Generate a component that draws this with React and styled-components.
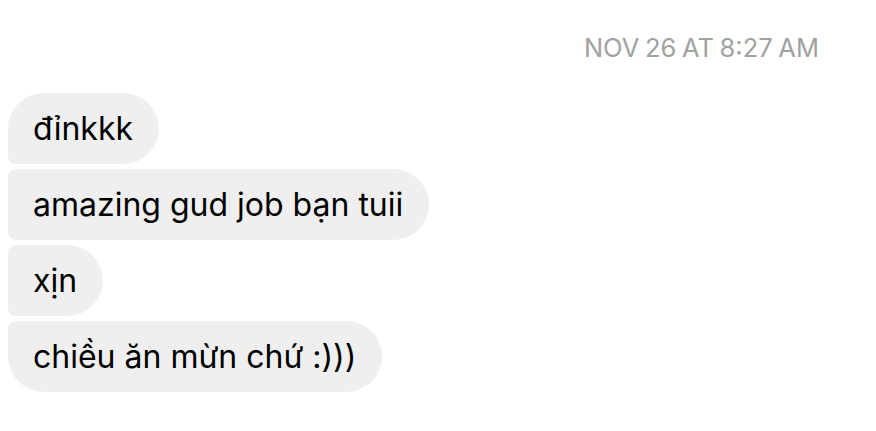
import React from "react";
import styled, { createGlobalStyle } from "styled-components";

const Global = createGlobalStyle`
  html, body { margin: 0; padding: 0; background: #fff; }
  body { font-family: Inter, "Noto Sans", sans-serif; -webkit-font-smoothing: antialiased; }
`;

const Screen = styled.div`
  width: 876px;
  height: 431px;
  overflow: hidden;
  background: #fff;
  display: flex;
  flex-direction: column;
  padding: 34px 0 0 8px;
  box-sizing: border-box;
`;

const Timestamp = styled.div`
  align-self: flex-end;
  margin-right: 57px;
  color: #a1a1a1;
  font-size: 25.5px;
  line-height: 28px;
  word-spacing: -1.5px;
`;

const Thread = styled.div`
  margin-top: 31px;
  display: flex;
  flex-direction: column;
  align-items: flex-start;
  gap: 5px;
`;

const Bubble = styled.div`
  background: #efefef;
  color: #000;
  font-size: 32px;
  line-height: 71px;
  height: 71px;
  padding: 0 26px 0 25px;
  box-sizing: border-box;
  white-space: nowrap;
  border-radius: ${(p) =>
    p.$pos === "first"
      ? "36px 36px 36px 8px"
      : p.$pos === "last"
      ? "8px 36px 36px 36px"
      : "8px 36px 36px 8px"};
`;

const messages = ["đỉnkkk", "amazing gud job bạn tuii", "xịn", "chiều ăn mừn chứ :)))"];

export default function App() {
  return (
    <Screen>
      <Global />
      <Timestamp>NOV 26 AT 8:27 AM</Timestamp>
      <Thread>
        {messages.map((m, i) => (
          <Bubble
            key={i}
            $pos={i === 0 ? "first" : i === messages.length - 1 ? "last" : "mid"}
          >
            {m}
          </Bubble>
        ))}
      </Thread>
    </Screen>
  );
}
